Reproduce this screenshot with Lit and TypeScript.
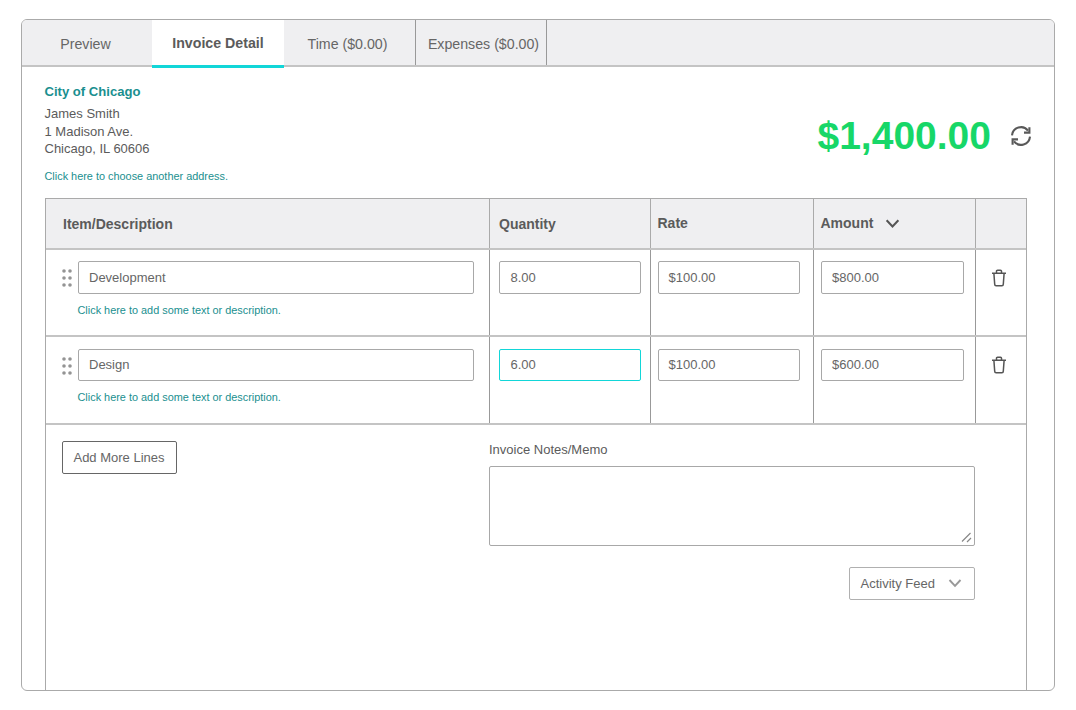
import { LitElement, html, svg, css } from "lit";
import { customElement } from "lit/decorators.js";

interface Line {
  name: string;
  qty: string;
  rate: string;
  amount: string;
  focused?: boolean;
}

const LINES: Line[] = [
  { name: "Development", qty: "8.00", rate: "$100.00", amount: "$800.00" },
  { name: "Design", qty: "6.00", rate: "$100.00", amount: "$600.00", focused: true },
];

const chevron = (w: number, color: string) => html`<svg width=${w} height=${w} viewBox="0 0 14 14" fill="none">
  <path d="M1.5 4 7 9.8 12.5 4" stroke=${color} stroke-width="1.9" />
</svg>`;

const trash = html`<svg width="16" height="18" viewBox="0 0 16 18" fill="none" stroke="#555" stroke-width="1.5">
  <path d="M1 4.2h14M5.5 4V2.2c0-.6.4-1 1-1h3c.6 0 1 .4 1 1V4M2.9 4.4l.8 10.9c0 .9.6 1.5 1.4 1.5h5.8c.8 0 1.4-.6 1.4-1.5l.8-10.9" />
</svg>`;

const refresh = html`<svg width="22" height="22" viewBox="0 0 22 22" fill="none" stroke="#595959" stroke-width="2.1">
  <path d="M2 10.4A9 9 0 0 1 18 5.6" />
  <path d="M20 11.6A9 9 0 0 1 4 16.4" />
  <path d="M19.4 2.2v5.4H14" />
  <path d="M2.6 19.8v-5.4H8" />
</svg>`;

const grip = html`<svg width="10" height="18" viewBox="0 0 10 18" fill="#949494">
  ${[2, 9, 16].map(
    (y) => svg`<circle cx="2" cy=${y} r="1.8" /><circle cx="8" cy=${y} r="1.8" />`
  )}
</svg>`;

@customElement("app-root")
export class AppRoot extends LitElement {
  static styles = css`
    :host {
      display: block;
      height: 710px;
      box-sizing: border-box;
      padding: 19px 21px;
      background: #fff;
      font-family: "Liberation Sans", Arial, sans-serif;
      font-size: 13px;
      color: #5b5b5b;
    }
    .card {
      box-sizing: border-box;
      width: 1034px;
      height: 672px;
      border: 1px solid #aaa;
      border-radius: 6px;
      overflow: hidden;
      display: flex;
      flex-direction: column;
    }
    .tabs {
      display: flex;
      height: 47px;
      flex: none;
      box-sizing: border-box;
      background: #efeff1;
      border-bottom: 2px solid #c4c4c4;
    }
    .tab {
      box-sizing: border-box;
      height: 45px;
      padding-top: 2px;
      display: flex;
      align-items: center;
      justify-content: center;
      font-size: 14.2px;
      color: #666;
    }
    .tab.preview {
      width: 130px;
      padding-right: 3px;
    }
    .tab.active {
      width: 132px;
      height: 48px;
      padding-top: 0;
      background: #fff;
      font-weight: 700;
      color: #5b5b5b;
      border-bottom: 3px solid #12d6d8;
    }
    .tab.time {
      width: 132px;
      border-right: 1px solid #999;
      padding-right: 4px;
    }
    .tab.expenses {
      width: 131px;
      border-right: 1px solid #999;
      padding-left: 5px;
    }
    .body {
      flex: 1;
      min-height: 0;
      display: flex;
      flex-direction: column;
      padding: 17px 0 0 23px;
    }
    .head {
      display: flex;
      justify-content: space-between;
      height: 113.5px;
      flex: none;
      margin-left: -0.5px;
    }
    .company {
      font-size: 13.1px;
      font-weight: 700;
      color: #1a8f8f;
      line-height: 16px;
      margin-bottom: 5px;
    }
    .addr {
      line-height: 17.5px;
    }
    .link {
      font-size: 10.9px;
      color: #1a8f8f;
    }
    .addr-link {
      margin-top: 12px;
    }
    .total {
      display: flex;
      align-items: center;
      gap: 19px;
      height: 40px;
      margin: 32px 22px 0 0;
      font-size: 39px;
      font-weight: 700;
      color: #17d768;
    }
    .sheet {
      flex: 1;
      min-height: 0;
      width: 982px;
      box-sizing: border-box;
      border: solid #aaa;
      border-width: 1px 1px 0;
      display: flex;
      flex-direction: column;
    }
    .row {
      display: grid;
      grid-template-columns: 443px 161px 162.5px 162.5px 52px;
      flex: none;
      border-bottom: 2px solid #c4c4c4;
      box-sizing: border-box;
    }
    .row.th {
      height: 51px;
      background: #efeff1;
      font-size: 14px;
      font-weight: 700;
    }
    .row.line {
      height: 87.5px;
    }
    .th > div {
      display: flex;
      align-items: center;
      gap: 12px;
      padding: 2px 0 0 9px;
    }
    .th > div:first-child {
      padding-left: 17px;
    }
    .th > div:nth-child(3) {
      padding: 0 0 0 6.5px;
    }
    .th > div:nth-child(4) {
      padding: 0 0 0 7px;
    }
    .cell {
      box-sizing: border-box;
      border-left: 1px solid #999;
      padding: 11.5px 12px 0 9px;
    }
    .row.th > div:not(:first-child) {
      border-left: 1px solid #aaa;
    }
    .item {
      display: grid;
      grid-template-columns: 10px 1fr;
      align-content: start;
      column-gap: 5.5px;
      padding: 11.5px 15.5px 0 16px;
    }
    .item svg {
      margin-top: 8px;
    }
    .input {
      box-sizing: border-box;
      height: 32.5px;
      border: 1px solid #a8a8a8;
      border-radius: 2px;
      display: flex;
      align-items: center;
      padding-left: 10.5px;
      color: #666;
    }
    .input.focus {
      border-color: #12d6d8;
    }
    .qty {
      padding-right: 9px;
    }
    .rate {
      padding-left: 6.5px;
      padding-right: 12.5px;
    }
    .rate .input {
      padding-left: 10px;
    }
    .amount {
      padding-left: 7px;
      padding-right: 11px;
    }
    .item .link {
      grid-column: 2;
      margin-top: 10px;
    }
    .del {
      display: flex;
      justify-content: center;
      padding: 19px 5px 0 0;
    }
    .foot {
      flex: 1;
      display: flex;
      justify-content: space-between;
      padding: 16px 51px 0 16px;
    }
    .add {
      box-sizing: border-box;
      width: 115px;
      height: 33px;
      padding-right: 1px;
      border: 1px solid #666;
      border-radius: 2px;
      display: flex;
      align-items: center;
      justify-content: center;
      color: #666;
    }
    .notes {
      width: 486px;
      display: flex;
      flex-direction: column;
      align-items: flex-end;
    }
    .notes label {
      align-self: flex-start;
      line-height: 17px;
      margin: 0 0 8px;
    }
    .memo {
      position: relative;
      box-sizing: border-box;
      width: 100%;
      height: 80px;
      border: 1px solid #a8a8a8;
      border-radius: 2px;
    }
    .memo svg {
      position: absolute;
      right: 2px;
      bottom: 2px;
    }
    .feed {
      box-sizing: border-box;
      width: 126px;
      height: 33px;
      margin-top: 21px;
      border: 1px solid #b0b0b0;
      border-radius: 2px;
      display: flex;
      align-items: center;
      justify-content: space-between;
      padding: 0 12px 0 10.5px;
      color: #666;
    }
  `;

  private renderLine(l: Line) {
    return html`<div class="row line">
      <div class="item">
        ${grip}
        <div class="input">${l.name}</div>
        <div class="link">Click here to add some text or description.</div>
      </div>
      <div class="cell qty"><div class="input ${l.focused ? "focus" : ""}">${l.qty}</div></div>
      <div class="cell rate"><div class="input">${l.rate}</div></div>
      <div class="cell amount"><div class="input">${l.amount}</div></div>
      <div class="cell del">${trash}</div>
    </div>`;
  }

  render() {
    return html`<div class="card">
      <div class="tabs">
        <div class="tab preview">Preview</div>
        <div class="tab active">Invoice Detail</div>
        <div class="tab time">Time ($0.00)</div>
        <div class="tab expenses">Expenses ($0.00)</div>
      </div>
      <div class="body">
        <div class="head">
          <div>
            <div class="company">City of Chicago</div>
            <div class="addr">James Smith<br />1 Madison Ave.<br />Chicago, IL 60606</div>
            <div class="link addr-link">Click here to choose another address.</div>
          </div>
          <div class="total">$1,400.00 ${refresh}</div>
        </div>
        <div class="sheet">
          <div class="row th">
            <div>Item/Description</div>
            <div>Quantity</div>
            <div>Rate</div>
            <div>Amount ${chevron(15, "#555")}</div>
            <div></div>
          </div>
          ${LINES.map((l) => this.renderLine(l))}
          <div class="foot">
            <div class="add">Add More Lines</div>
            <div class="notes">
              <label>Invoice Notes/Memo</label>
              <div class="memo">
                <svg width="11" height="11" viewBox="0 0 11 11" stroke="#888" stroke-width="1.2">
                  <path d="M1 9.5 9.5 1M6 10 10 6" />
                </svg>
              </div>
              <div class="feed">Activity Feed ${chevron(14, "#999")}</div>
            </div>
          </div>
        </div>
      </div>
    </div>`;
  }
}
